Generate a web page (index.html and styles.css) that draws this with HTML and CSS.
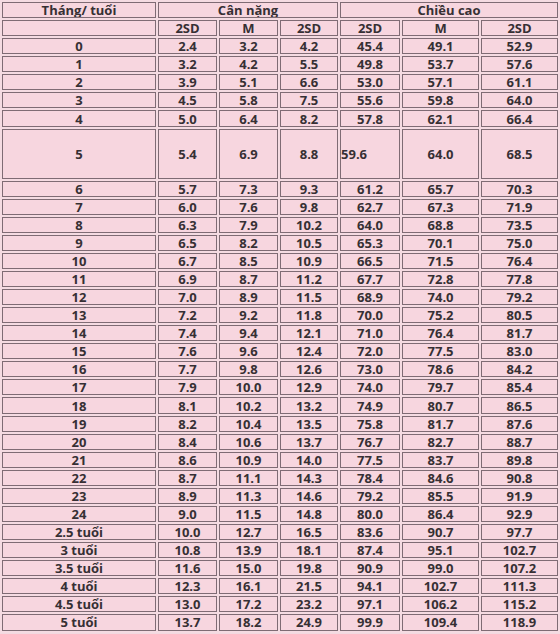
FILE: index.html
```html
<!DOCTYPE html>
<html lang="vi">
<head>
<meta charset="utf-8">
<title>Bảng chiều cao cân nặng</title>
<link rel="stylesheet" href="styles.css">
</head>
<body>
<table class="chart">
<colgroup>
<col class="c-age"><col class="c-n"><col class="c-n"><col class="c-n2"><col class="c-n3"><col class="c-w"><col class="c-w">
</colgroup>
<tr><td>Tháng/ tuổi</td><td colspan="3">Cân nặng</td><td colspan="3">Chiều cao</td></tr>
<tr><td></td><td>2SD</td><td>M</td><td>2SD</td><td>2SD</td><td>M</td><td>2SD</td></tr>
<tr><td>0</td><td>2.4</td><td>3.2</td><td>4.2</td><td>45.4</td><td>49.1</td><td>52.9</td></tr>
<tr><td>1</td><td>3.2</td><td>4.2</td><td>5.5</td><td>49.8</td><td>53.7</td><td>57.6</td></tr>
<tr><td>2</td><td>3.9</td><td>5.1</td><td>6.6</td><td>53.0</td><td>57.1</td><td>61.1</td></tr>
<tr><td>3</td><td>4.5</td><td>5.8</td><td>7.5</td><td>55.6</td><td>59.8</td><td>64.0</td></tr>
<tr><td>4</td><td>5.0</td><td>6.4</td><td>8.2</td><td>57.8</td><td>62.1</td><td>66.4</td></tr>
<tr class="tall"><td>5</td><td>5.4</td><td>6.9</td><td>8.8</td><td class="left">59.6</td><td>64.0</td><td>68.5</td></tr>
<tr><td>6</td><td>5.7</td><td>7.3</td><td>9.3</td><td>61.2</td><td>65.7</td><td>70.3</td></tr>
<tr><td>7</td><td>6.0</td><td>7.6</td><td>9.8</td><td>62.7</td><td>67.3</td><td>71.9</td></tr>
<tr><td>8</td><td>6.3</td><td>7.9</td><td>10.2</td><td>64.0</td><td>68.8</td><td>73.5</td></tr>
<tr><td>9</td><td>6.5</td><td>8.2</td><td>10.5</td><td>65.3</td><td>70.1</td><td>75.0</td></tr>
<tr><td>10</td><td>6.7</td><td>8.5</td><td>10.9</td><td>66.5</td><td>71.5</td><td>76.4</td></tr>
<tr><td>11</td><td>6.9</td><td>8.7</td><td>11.2</td><td>67.7</td><td>72.8</td><td>77.8</td></tr>
<tr><td>12</td><td>7.0</td><td>8.9</td><td>11.5</td><td>68.9</td><td>74.0</td><td>79.2</td></tr>
<tr><td>13</td><td>7.2</td><td>9.2</td><td>11.8</td><td>70.0</td><td>75.2</td><td>80.5</td></tr>
<tr><td>14</td><td>7.4</td><td>9.4</td><td>12.1</td><td>71.0</td><td>76.4</td><td>81.7</td></tr>
<tr><td>15</td><td>7.6</td><td>9.6</td><td>12.4</td><td>72.0</td><td>77.5</td><td>83.0</td></tr>
<tr><td>16</td><td>7.7</td><td>9.8</td><td>12.6</td><td>73.0</td><td>78.6</td><td>84.2</td></tr>
<tr><td>17</td><td>7.9</td><td>10.0</td><td>12.9</td><td>74.0</td><td>79.7</td><td>85.4</td></tr>
<tr><td>18</td><td>8.1</td><td>10.2</td><td>13.2</td><td>74.9</td><td>80.7</td><td>86.5</td></tr>
<tr><td>19</td><td>8.2</td><td>10.4</td><td>13.5</td><td>75.8</td><td>81.7</td><td>87.6</td></tr>
<tr><td>20</td><td>8.4</td><td>10.6</td><td>13.7</td><td>76.7</td><td>82.7</td><td>88.7</td></tr>
<tr><td>21</td><td>8.6</td><td>10.9</td><td>14.0</td><td>77.5</td><td>83.7</td><td>89.8</td></tr>
<tr><td>22</td><td>8.7</td><td>11.1</td><td>14.3</td><td>78.4</td><td>84.6</td><td>90.8</td></tr>
<tr><td>23</td><td>8.9</td><td>11.3</td><td>14.6</td><td>79.2</td><td>85.5</td><td>91.9</td></tr>
<tr><td>24</td><td>9.0</td><td>11.5</td><td>14.8</td><td>80.0</td><td>86.4</td><td>92.9</td></tr>
<tr><td>2.5 tuổi</td><td>10.0</td><td>12.7</td><td>16.5</td><td>83.6</td><td>90.7</td><td>97.7</td></tr>
<tr><td>3 tuổi</td><td>10.8</td><td>13.9</td><td>18.1</td><td>87.4</td><td>95.1</td><td>102.7</td></tr>
<tr><td>3.5 tuổi</td><td>11.6</td><td>15.0</td><td>19.8</td><td>90.9</td><td>99.0</td><td>107.2</td></tr>
<tr><td>4 tuổi</td><td>12.3</td><td>16.1</td><td>21.5</td><td>94.1</td><td>102.7</td><td>111.3</td></tr>
<tr><td>4.5 tuổi</td><td>13.0</td><td>17.2</td><td>23.2</td><td>97.1</td><td>106.2</td><td>115.2</td></tr>
<tr><td>5 tuổi</td><td>13.7</td><td>18.2</td><td>24.9</td><td>99.9</td><td>109.4</td><td>118.9</td></tr>
</table>
</body>
</html>
```
FILE: styles.css
```css
html, body {
  margin: 0;
  padding: 0;
  background: #f3d9e0;
}
.chart {
  width: 560px;
  table-layout: fixed;
  border-collapse: separate;
  border-spacing: 2px;
  background: #f5dbe2;
  font-family: "Open Sans", "DejaVu Sans", sans-serif;
  font-weight: 700;
  font-size: 13px;
  color: #363034;
}
.c-age { width: 154px; }
.c-n { width: 59px; }
.c-n2 { width: 58px; }
.c-n3 { width: 60px; }
.c-w { width: 77px; }
.chart td {
  box-sizing: border-box;
  height: 16.08px;
  line-height: 14px;
  padding: 0;
  border: 1px solid #7f6b74;
  background: #f7d6df;
  text-align: center;
  vertical-align: middle;
  white-space: nowrap;
  overflow: hidden;
}
.chart .tall td {
  height: 50px;
}
.chart td.left {
  text-align: left;
}
```
